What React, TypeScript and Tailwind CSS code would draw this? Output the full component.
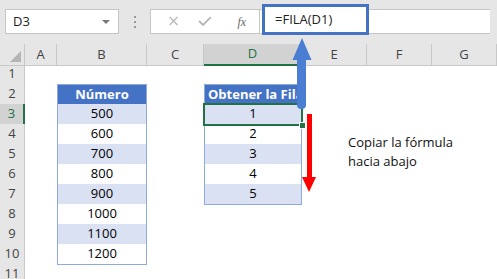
import React from "react";

const COLS = ["A", "B", "C", "D", "E", "F", "G"];
const numeros = [500, 600, 700, 800, 900, 1000, 1100, 1200];

const headerCell =
  "h-full flex items-center justify-center border-r border-b border-[#c8c8c8] bg-[#e6e6e6] text-[#444] text-[13px]";

const TableCell: React.FC<{
  children?: React.ReactNode;
  tone: "head" | "band" | "plain";
  top?: boolean;
}> = ({ children, tone, top }) => {
  const fill =
    tone === "head"
      ? "bg-[#4472c4] text-white font-bold"
      : tone === "band"
        ? "bg-[#d9e1f2] text-black"
        : "bg-white text-black";
  return (
    <div
      className={`h-full flex items-center justify-center border-x border-b border-[#8ea9db] whitespace-nowrap overflow-hidden text-[13px] ${
        top ? "border-t" : ""
      } ${fill}`}
    >
      {children}
    </div>
  );
};

export default function App() {
  const rows = Array.from({ length: 11 }, (_, i) => i + 1);

  const renderB = (r: number) => {
    if (r === 2) return <TableCell tone="head" top>Número</TableCell>;
    if (r >= 3 && r <= 10)
      return <TableCell tone={r % 2 === 1 ? "band" : "plain"}>{numeros[r - 3]}</TableCell>;
    return <div />;
  };

  const renderD = (r: number) => {
    if (r === 2)
      return (
        <div className="h-full flex items-center border-x border-b border-t border-[#8ea9db] bg-[#4472c4] text-white font-bold text-[13px] whitespace-nowrap overflow-hidden pl-[3px]">
          Obtener la Fila
        </div>
      );
    if (r >= 3 && r <= 7) {
      const cell = <TableCell tone={r % 2 === 1 ? "band" : "plain"}>{r - 2}</TableCell>;
      if (r === 3)
        return (
          <div className="relative h-full">
            {cell}
            <div className="absolute -left-px -top-px -right-px -bottom-px border-2 border-[#217346]" />
            <div className="absolute -right-[4px] -bottom-[4px] w-[7px] h-[7px] bg-[#217346] border border-white" />
          </div>
        );
      return cell;
    }
    return <div />;
  };

  return (
    <div
      className="relative w-[497px] h-[279px] overflow-hidden bg-white"
      style={{ fontFamily: '"Open Sans", "Noto Sans", sans-serif' }}
    >
      {/* formula bar */}
      <div className="h-[44px] bg-[#e6e6e6] flex items-start pt-[9px]">
        <div className="ml-[5px] w-[114px] h-[25px] bg-white border border-[#c6c6c6] flex items-center justify-between pl-[7px] pr-[8px] text-[13px] text-[#222]">
          <span>D3</span>
          <span className="w-0 h-0 border-x-[4px] border-x-transparent border-t-[4px] border-t-[#777]" />
        </div>
        <div className="w-[31px] h-[25px] flex flex-col items-center justify-center gap-[3px]">
          <span className="w-[2px] h-[2px] bg-[#9a9a9a]" />
          <span className="w-[2px] h-[2px] bg-[#9a9a9a]" />
          <span className="w-[2px] h-[2px] bg-[#9a9a9a]" />
        </div>
        <div className="w-[110px] h-[25px] bg-white border border-[#c6c6c6] flex items-center text-[#b5b5b5]">
          <svg width="110" height="23" viewBox="0 0 110 23">
            <path d="M19 7 L27 15 M27 7 L19 15" stroke="#b8b8b8" strokeWidth="1.4" fill="none" />
            <path d="M49 11 L53 15 L61 7" stroke="#b8b8b8" strokeWidth="2" fill="none" />
            <text x="88" y="16" fontSize="12" fontStyle="italic" fontFamily="Liberation Serif, serif" fill="#666">
              fx
            </text>
          </svg>
        </div>
        <div className="flex-1 h-[25px] bg-white border-y border-[#c6c6c6] mr-[7px]" />
      </div>

      {/* column headers */}
      <div className="grid grid-cols-[25px_32px_90px_57px_98px_65px_65px_65px] h-[20px]">
        <div className={`${headerCell} relative`}>
          <span className="absolute right-[3px] bottom-[3px] w-0 h-0 border-l-[11px] border-l-transparent border-b-[11px] border-b-[#b4b4b4]" />
        </div>
        {COLS.map((c) =>
          c === "D" ? (
            <div
              key={c}
              className="h-full flex items-center justify-center border-r border-[#c8c8c8] border-b-2 border-b-[#217346] bg-[#d2d2d2] text-[#217346] text-[13px]"
            >
              {c}
            </div>
          ) : (
            <div key={c} className={headerCell}>
              {c}
            </div>
          )
        )}
      </div>

      {/* rows */}
      {rows.map((r) => (
        <div key={r} className="grid grid-cols-[25px_32px_90px_57px_98px_65px_65px_65px] h-[20px]">
          {r === 3 ? (
            <div className="h-full flex items-center justify-center border-b border-[#c8c8c8] border-r-2 border-r-[#217346] bg-[#d2d2d2] text-[#217346] text-[13px]">
              {r}
            </div>
          ) : (
            <div className={headerCell}>{r}</div>
          )}
          <div />
          {renderB(r)}
          <div />
          {renderD(r)}
          <div />
          <div />
          <div />
        </div>
      ))}

      {/* annotation: formula box */}
      <div className="absolute left-[262px] top-[4px] w-[107px] h-[31px] border-[3px] border-[#4472c4] bg-white flex items-center pl-[10px] text-[13px] text-[#222]">
        =FILA(D1)
      </div>

      {/* annotation arrows */}
      <svg className="absolute left-0 top-0 pointer-events-none" width="497" height="279">
        <path
          d="M302 38 L311.5 60 L306 60 L306 105 Q306 109 301.5 109 Q297 109 297 105 L297 60 L292.5 60 Z"
          fill="#4a7ed2"
        />
        <path d="M307 114 L312 114 L312 177 L316 177 L309 192 L302 177 L307 177 Z" fill="#ff0000" />
      </svg>

      <div className="absolute left-[348px] top-[133px] text-[13px] leading-[19px] text-[#111]">
        <div>Copiar la fórmula</div>
        <div>hacia abajo</div>
      </div>
    </div>
  );
}
